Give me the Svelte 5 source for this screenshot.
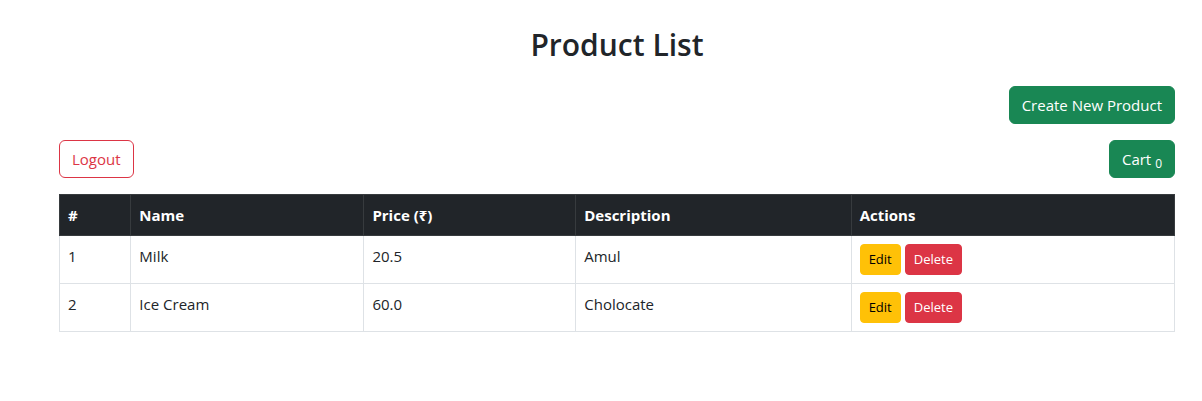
<script>
  const products = [
    { id: 1, name: 'Milk', price: '20.5', description: 'Amul' },
    { id: 2, name: 'Ice Cream', price: '60.0', description: 'Cholocate' }
  ];
  let cartCount = $state(0);
</script>

<main>
  <h2>Product List</h2>
  <div class="row end">
    <a class="btn success" href="#create">Create New Product</a>
  </div>
  <div class="row">
    <button class="btn outline" type="button">Logout</button>
    <button class="btn success" type="button">Cart <sub>{cartCount}</sub></button>
  </div>
  <table>
    <colgroup>
      <col class="c-id" /><col class="c-name" /><col class="c-price" /><col class="c-desc" /><col />
    </colgroup>
    <thead>
      <tr>
        <th scope="col">#</th>
        <th scope="col">Name</th>
        <th scope="col">Price (₹)</th>
        <th scope="col">Description</th>
        <th scope="col">Actions</th>
      </tr>
    </thead>
    <tbody>
      {#each products as product (product.id)}
        <tr>
          <td>{product.id}</td>
          <td>{product.name}</td>
          <td>{product.price}</td>
          <td>{product.description}</td>
          <td>
            <div class="actions">
              <a class="btn small warning" href="#edit">Edit</a>
              <button class="btn small danger" type="button">Delete</button>
            </div>
          </td>
        </tr>
      {/each}
    </tbody>
  </table>
</main>

<style>
  :global(body) {
    background: #fff;
    color: #212529;
    font: 15px/24px "Segoe UI", "Open Sans", "Noto Sans", sans-serif;
  }
  main {
    padding: 26px 27px 24px 59px;
  }
  h2 {
    margin: 0 0 22px;
    text-align: center;
    font-size: 30px;
    line-height: 38px;
    font-weight: 600;
  }
  .row {
    display: flex;
    justify-content: space-between;
    margin-bottom: 16px;
  }
  .end {
    justify-content: flex-end;
  }
  .btn {
    display: inline-block;
    box-sizing: border-box;
    padding: 6px 12px;
    border: 1px solid transparent;
    border-radius: 6px;
    font: inherit;
    text-decoration: none;
    white-space: nowrap;
    cursor: pointer;
  }
  .success {
    background: #198754;
    border-color: #198754;
    color: #fff;
  }
  .outline {
    background: transparent;
    border-color: #dc3545;
    color: #dc3545;
  }
  sub {
    position: relative;
    bottom: -3px;
    font-size: 12px;
    line-height: 0;
    vertical-align: baseline;
  }
  .small {
    padding: 4px 8px;
    border-radius: 4px;
    font-size: 13px;
    line-height: 21px;
  }
  .warning {
    background: #ffc107;
    border-color: #ffc107;
    color: #000;
  }
  .danger {
    background: #dc3545;
    border-color: #dc3545;
    color: #fff;
  }
  table {
    width: 100%;
    border-collapse: collapse;
    table-layout: fixed;
  }
  .c-id { width: 6.4%; }
  .c-name { width: 20.9%; }
  .c-price { width: 19%; }
  .c-desc { width: 24.7%; }
  th, td {
    padding: 8px;
    border: 1px solid #dee2e6;
    text-align: left;
    vertical-align: top;
  }
  th {
    background: #212529;
    border-color: #373b3e;
    color: #fff;
    font-weight: 700;
  }
  .actions {
    display: flex;
    gap: 4px;
  }
</style>
